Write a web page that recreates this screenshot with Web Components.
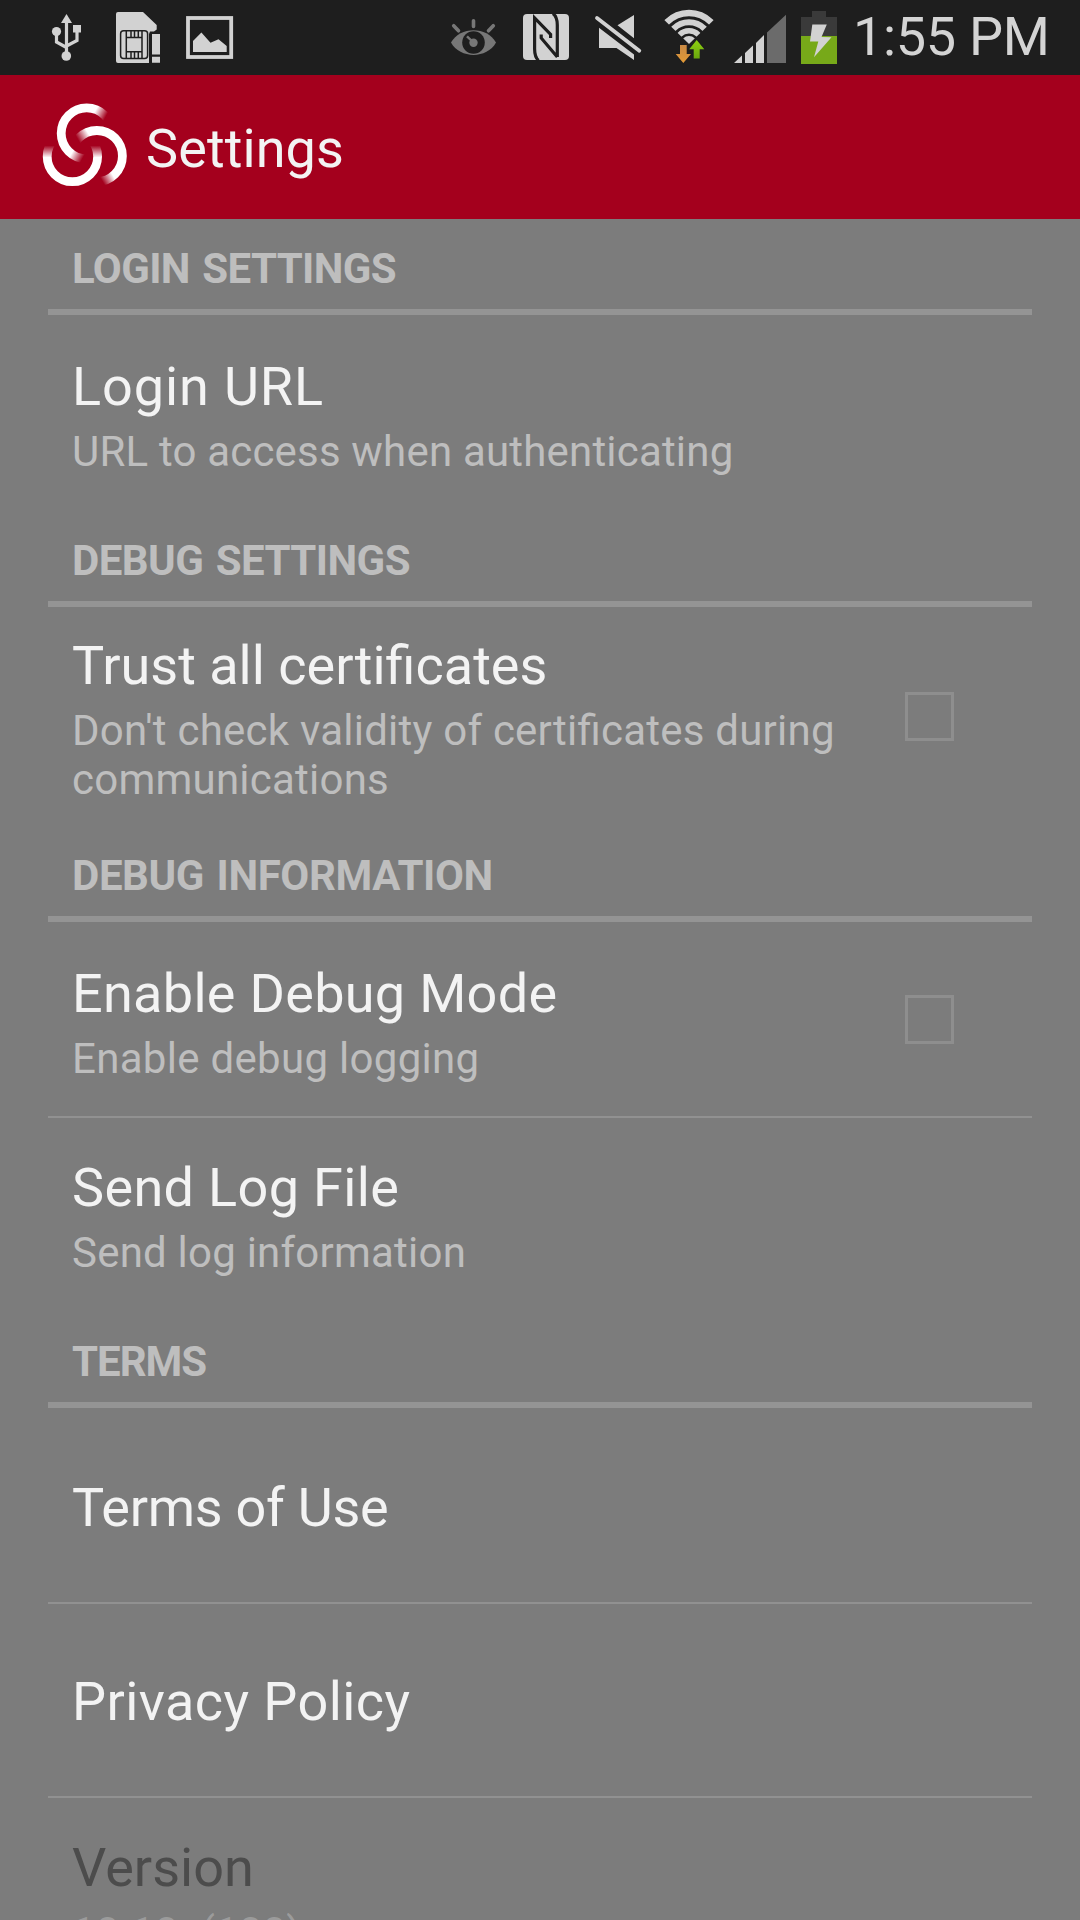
<!DOCTYPE html>
<html lang="en">
<head>
<meta charset="utf-8">
<title>Settings</title>
<style>
html,body{margin:0;background:#7c7c7c}
body{width:1080px;height:1920px;overflow:hidden;font-family:Roboto,"Noto Sans",sans-serif}
</style>
</head>
<body>
<settings-screen></settings-screen>

<template id="t-status">
<style>
:host{display:flex;justify-content:space-between;height:75px;background:#1e1e1e;color:#d4d4d4}
.group{display:flex}
svg{display:block;height:75px}
.time{font-size:54px;line-height:63px;padding-top:5px;width:227px;letter-spacing:-.31px;white-space:nowrap}
</style>
<div class="group">
  <svg width="98" viewBox="0 0 98 75" fill="#d2d2d2">
    <path d="M66.5 14L72 23H61z"/><path d="M66.5 20V56M56.5 32V42L66.5 47.5M77 30V40.5L66.5 46" fill="none" stroke="#d2d2d2" stroke-width="3.2"/>
    <circle cx="56.5" cy="31.5" r="4.6"/><rect x="73" y="25" width="8" height="7.5"/><circle cx="66.3" cy="56" r="4.8"/>
  </svg>
  <svg width="74" viewBox="98 0 74 75" fill="#d2d2d2">
    <path d="M118 12H143L156.7 25V29.5L154 31.5H150L149 34V63H118Q116 63 116 61V14Q116 12 118 12z"/>
    <g fill="none" stroke="#1e1e1e" stroke-width="1.5"><rect x="120.6" y="30.8" width="27" height="27.6" rx="3"/><path d="M126.3 31V58.5M142 31V58.5M126.3 37.5H142M126.3 51.7H142M131 31V37.5M134.5 31V37.5M138.3 31V37.5M131 51.7V58.5M134.5 51.7V58.5M138.3 51.7V58.5"/></g>
    <path d="M152 34H160V54.5H152zM152 56.7H160V62.8H152z"/>
  </svg>
  <svg width="78" viewBox="172 0 78 75" fill="#d2d2d2">
    <rect x="188" y="18" width="43.2" height="39" fill="none" stroke="#d2d2d2" stroke-width="3.8"/>
    <path d="M193 52V41L201.4 32.5L210.5 42.8L218.5 39.2L226.7 46V52z"/>
  </svg>
</div>
<div class="group">
  <svg width="70" viewBox="440 0 70 75" fill="#777">
    <path d="M451 42.5C460 26 487 26 496 42.5C487 59 460 59 451 42.5z"/>
    <circle cx="473.5" cy="42.5" r="11.3" fill="#1e1e1e"/><circle cx="473.5" cy="42.7" r="4.2"/>
    <path d="M473 42L467 36.3" stroke="#777" stroke-width="2.4"/>
    <path d="M453.7 25.7L458.5 30.8M473.5 20.7V26.5M493.3 25.7L488.5 30.8" stroke="#777" stroke-width="3.6" stroke-linecap="round"/>
  </svg>
  <svg width="72" viewBox="510 0 72 75">
    <rect x="523" y="14" width="46" height="46" rx="4" fill="#d2d2d2"/>
    <path d="M538.5 60.5Q534.6 57 534.6 49V18L550.6 34.5V38M557.3 57V25Q557.3 17 553 13.5M557.3 57L541.2 38V34.5" fill="none" stroke="#1e1e1e" stroke-width="3.2"/>
  </svg>
  <svg width="74" viewBox="582 0 74 75" fill="#d2d2d2">
    <path d="M617.5 25.3L634 15V38.3zM599 27.7L634 54.5V60L616.5 48H599z"/>
    <path d="M597 18L639.3 50.7" stroke="#d2d2d2" stroke-width="3.8" stroke-linecap="round"/>
  </svg>
  <svg width="70" viewBox="656 0 70 75">
    <defs><clipPath id="w"><path d="M689 44L655 11V0H723V11z"/></clipPath>
    <linearGradient id="o" x2="0" y2="1"><stop stop-color="#c98a45"/><stop offset="1" stop-color="#e39a35"/></linearGradient>
    <linearGradient id="g" x2="0" y2="1"><stop stop-color="#8fd012"/><stop offset="1" stop-color="#6aa80e"/></linearGradient></defs>
    <g clip-path="url(#w)" fill="none" stroke="#d2d2d2"><circle cx="689" cy="44" r="31" stroke-width="6.4"/><circle cx="689" cy="44" r="21.8" stroke-width="6"/><circle cx="689" cy="44" r="13.2" stroke-width="5.4"/><circle cx="689" cy="44" r="4" stroke-width="8"/></g>
    <g stroke="#1e1e1e" stroke-width="1.6" paint-order="stroke"><path d="M680 45H686.7V54H691L683.3 63L675.7 54H680z" fill="url(#o)"/>
    <path d="M696.7 40L704.3 49.3H699.7V58.5H693.7V49.3H689.2z" fill="url(#g)"/></g>
  </svg>
  <svg width="67" viewBox="726 0 67 75" fill="#d2d2d2">
    <path d="M734 63L742 55.5V63zM745 63V53L753 45.5V63zM756 63V43L764 35V63z"/><path d="M767 63V32.5L786 14.8V63z" fill="#6b6b6b"/>
  </svg>
  <svg width="60" viewBox="793 0 60 75">
    <path d="M801 17H812V11H826V17H837V36H801z" fill="#3a3a3a"/><path d="M801 36H837V64H801z" fill="#77a919"/>
    <path d="M812.3 24.5H826.8L821.5 37L831.5 37.3L814 57.3L818.3 41.5H810z" fill="#d2d2d2"/>
  </svg>
  <div class="time"><slot></slot></div>
</div>
</template>

<template id="t-bar">
<style>
:host{display:flex;height:144px;background:#a4001d;color:#f3f3f3}
svg{display:block;width:146px;height:144px}
.title{padding-top:42px;font-size:54px;line-height:63px;letter-spacing:.1px}
</style>
<svg viewBox="0 75 146 144" fill="none" stroke-width="8.8">
  <defs>
    <linearGradient id="a" gradientUnits="userSpaceOnUse" x1="96" y1="109.4" x2="106.6" y2="115.3"><stop stop-color="#fff"/><stop offset="1" stop-color="#fff" stop-opacity="0"/></linearGradient>
    <linearGradient id="b" gradientUnits="userSpaceOnUse" x1="87.6" y1="132.2" x2="77.2" y2="138.3"><stop stop-color="#fff"/><stop offset="1" stop-color="#fff" stop-opacity="0"/></linearGradient>
    <linearGradient id="c" gradientUnits="userSpaceOnUse" x1="0" y1="157.5" x2="0" y2="145.5"><stop stop-color="#fff"/><stop offset="1" stop-color="#fff" stop-opacity="0"/></linearGradient>
  </defs>
  <circle cx="86.7" cy="133.3" r="25.5" stroke="url(#a)"/>
  <circle cx="96.9" cy="156" r="25.5" stroke="url(#b)"/>
  <circle cx="72.4" cy="156.5" r="25.2" stroke="url(#c)"/>
</svg>
<div class="title"><slot></slot></div>
</template>

<template id="t-heading">
<style>
:host{display:block;box-sizing:border-box;height:96px;padding:25px 24px 0;border-bottom:6px solid #949494;color:#bebebe;font-size:42px;font-weight:700;line-height:49px;white-space:nowrap}
</style>
<slot></slot>
</template>

<template id="t-row">
<style>
:host{display:flex;box-sizing:border-box;height:194px;padding:0 78px 0 24px;color:#f3f3f3}
:host([divided]){border-bottom:2px solid #919191;height:196px}
:host([disabled]){color:#4c4c4c;--sub:#9b9b9b}
.text{flex:1;padding-top:var(--top,38px)}
.title{font-size:54px;line-height:63px;white-space:nowrap;font-feature-settings:"liga" 1}
.sub{margin-top:9px;font-size:42px;line-height:49px;color:var(--sub,#bebebe);letter-spacing:var(--ls,.2px);font-feature-settings:"liga" 1}
slot[name=widget]{display:flex;align-items:center}
</style>
<div class="text"><div class="title"><slot></slot></div><div class="sub"><slot name="summary"></slot></div></div>
<slot name="widget"></slot>
</template>

<template id="t-check">
<style>
:host{display:block;align-self:center;box-sizing:border-box;width:49px;height:49px;border:3px solid #8e8e8e}
</style>
</template>

<template id="t-screen">
<style>
:host{display:block;width:1080px;height:1920px;overflow:hidden;background:#7c7c7c}
main{padding:0 48px}
</style>
<status-bar>1:55 PM</status-bar>
<action-bar>Settings</action-bar>
<main>
  <section-heading style="letter-spacing:-.6px;word-spacing:2.5px">LOGIN SETTINGS</section-heading>
  <pref-row style="height:196px;--top:40px;--ls:.19px"><span style="letter-spacing:.9px">Login URL</span><span slot="summary">URL to access when authenticating</span></pref-row>
  <section-heading style="letter-spacing:-.55px;word-spacing:2.5px">DEBUG SETTINGS</section-heading>
  <pref-row style="height:219px;--top:27px;--ls:.23px"><span>Trust all certificates</span><span slot="summary">Don't check validity of certificates during communications</span><check-box slot="widget" style="margin-bottom:1px"></check-box></pref-row>
  <section-heading style="letter-spacing:-.4px;word-spacing:2.5px">DEBUG INFORMATION</section-heading>
  <pref-row divided style="--top:40px;--ls:.3px"><span style="letter-spacing:.3px">Enable Debug Mode</span><span slot="summary">Enable debug logging</span><check-box slot="widget" style="margin-top:1px"></check-box></pref-row>
  <pref-row style="--top:38px;--ls:.22px"><span style="letter-spacing:.35px">Send Log File</span><span slot="summary">Send log information</span></pref-row>
  <section-heading style="letter-spacing:-1px">TERMS</section-heading>
  <pref-row divided style="--top:68px"><span style="letter-spacing:-.27px">Terms of Use</span></pref-row>
  <pref-row divided style="height:194px;--top:66px"><span style="letter-spacing:.43px">Privacy Policy</span></pref-row>
  <pref-row disabled><span>Version</span><span slot="summary">10.10. (100)</span></pref-row>
</main>
</template>

<script>
const define = (name, id) => customElements.define(name, class extends HTMLElement {
  constructor() {
    super();
    this.attachShadow({ mode: 'open' }).append(document.getElementById(id).content.cloneNode(true));
  }
});
define('status-bar', 't-status');
define('action-bar', 't-bar');
define('section-heading', 't-heading');
define('pref-row', 't-row');
define('check-box', 't-check');
define('settings-screen', 't-screen');
</script>
</body>
</html>
